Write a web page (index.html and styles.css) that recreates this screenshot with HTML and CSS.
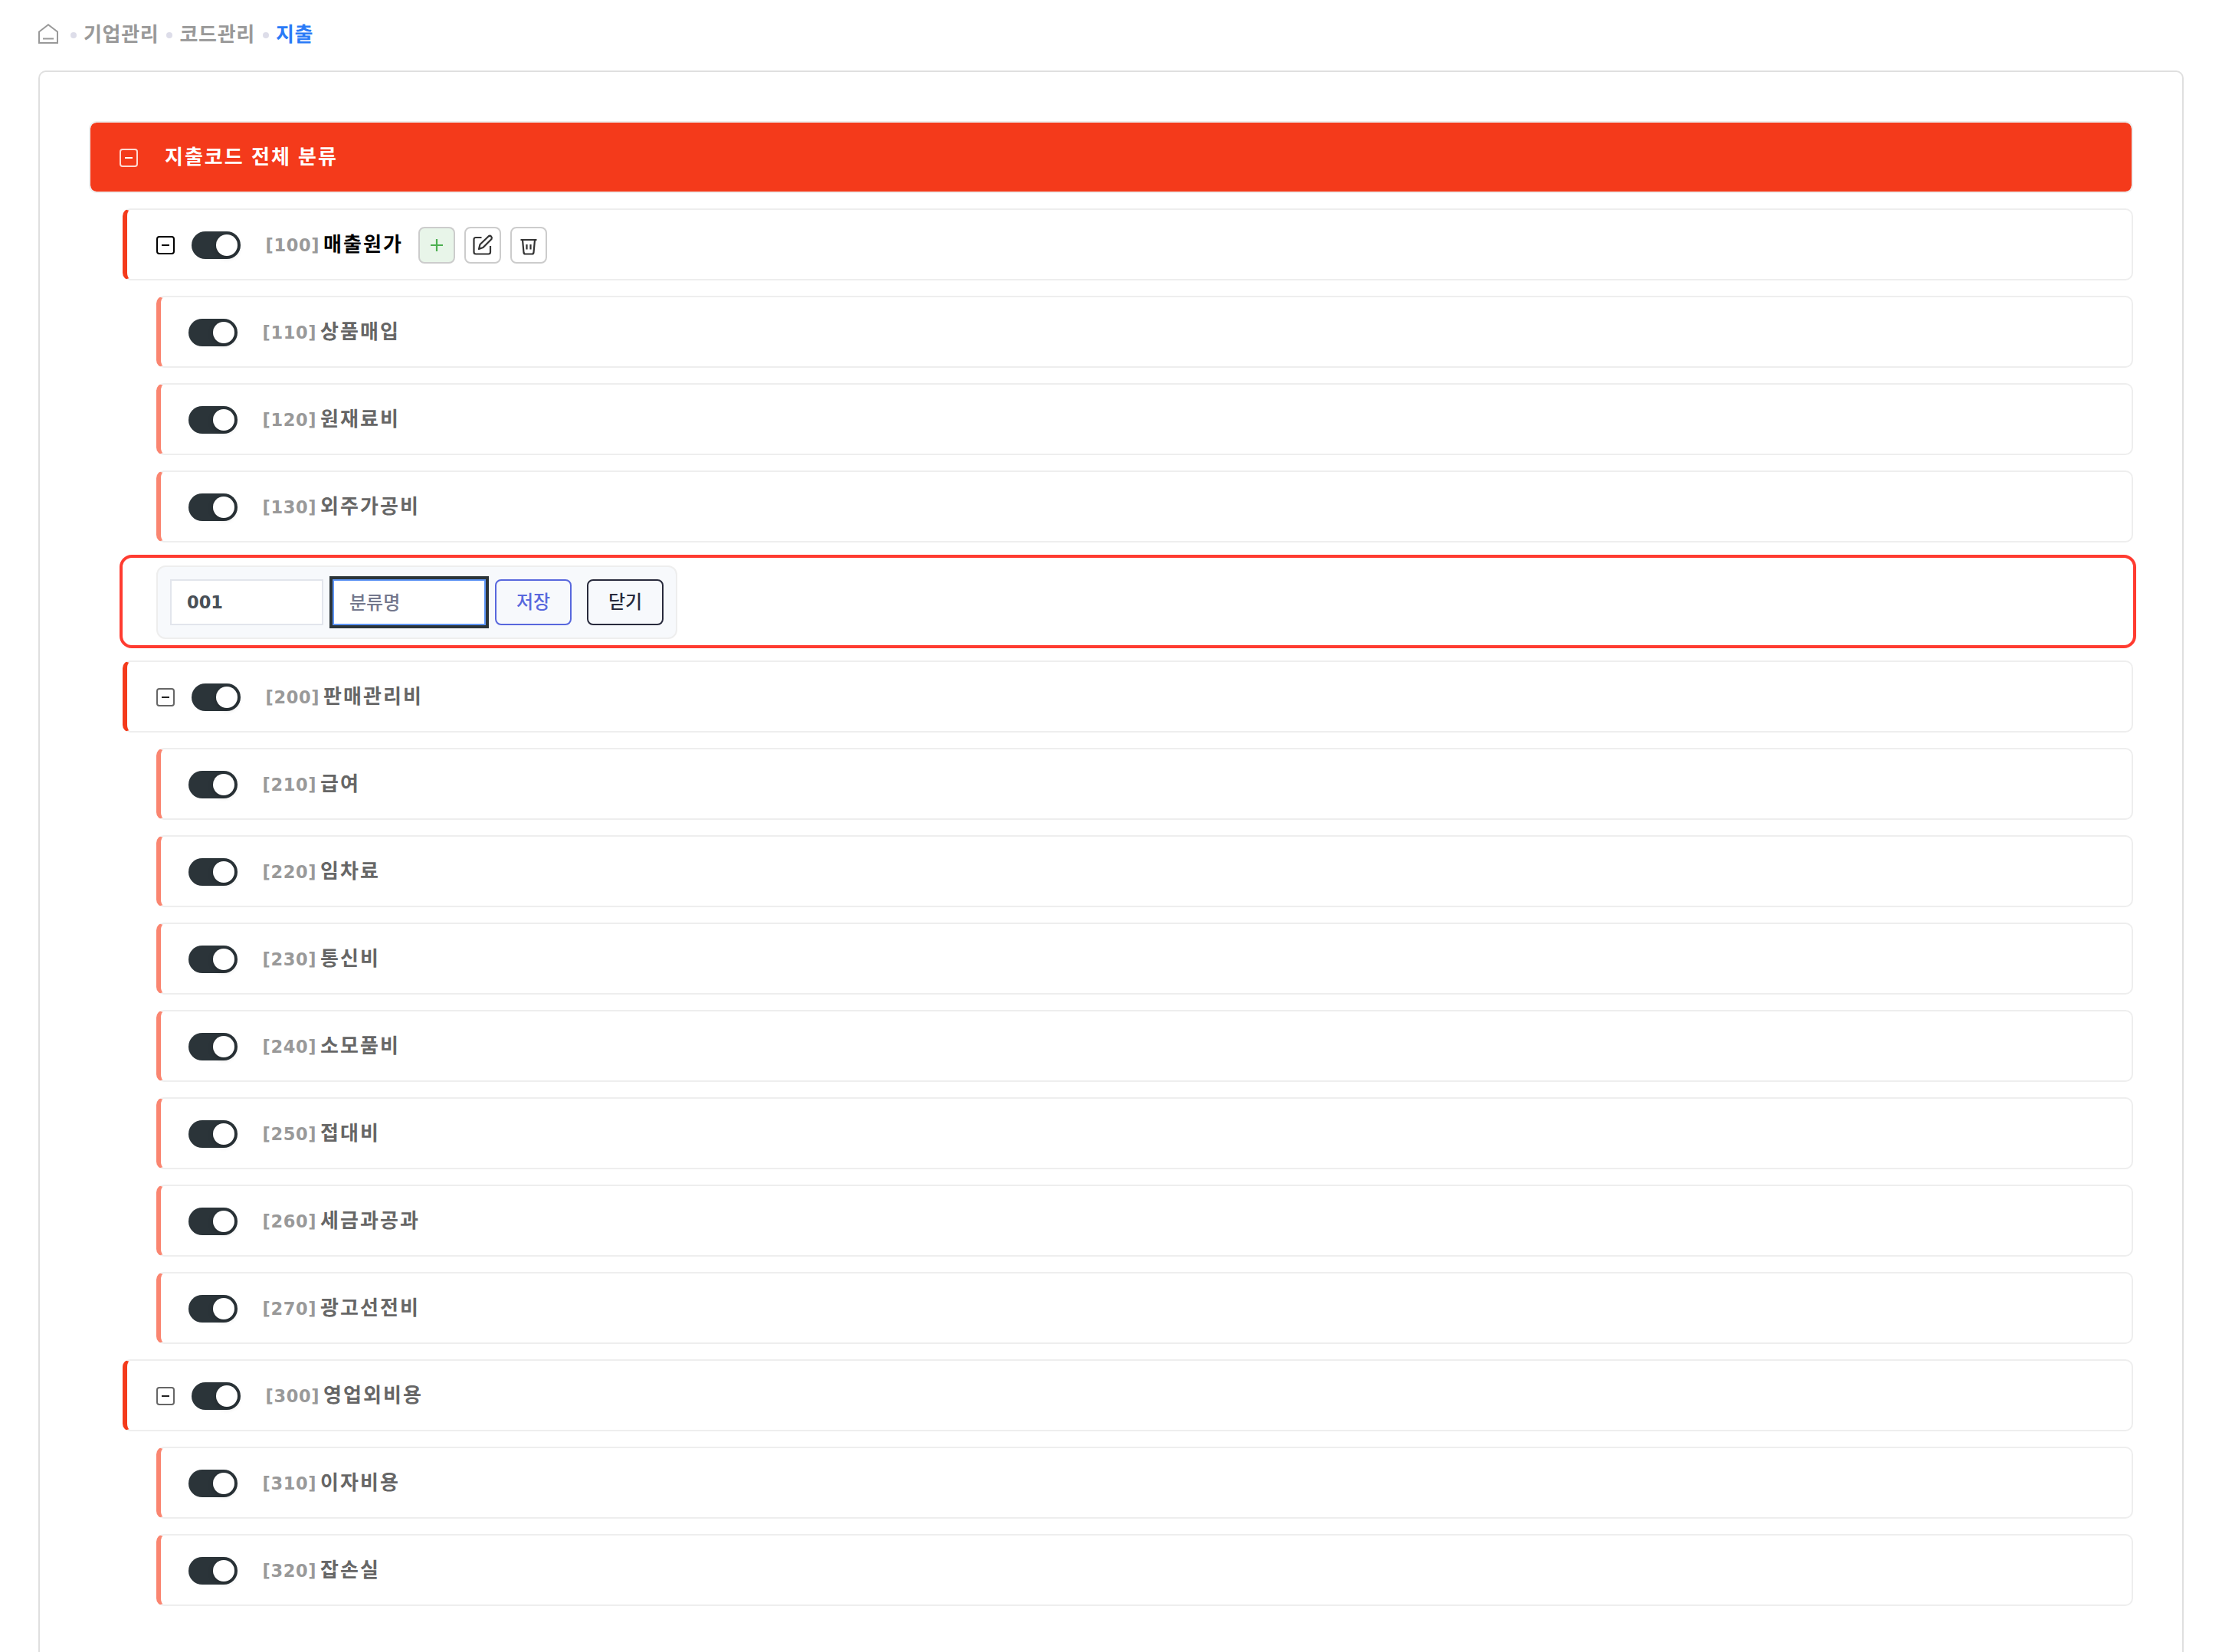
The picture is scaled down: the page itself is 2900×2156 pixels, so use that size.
FILE: index.html
```html
<!DOCTYPE html>
<html lang="ko">
<head>
<meta charset="utf-8">
<title>지출</title>
<link rel="stylesheet" href="styles.css">
</head>
<body>
<nav class="crumbs">
  <svg class="home" viewBox="0 0 26 26"><path d="M1 10.500 13 1.300 25 10.500V25H1ZM6 19.500H20"/></svg>
  <i class="dot"></i><span class="crumb">기업관리</span>
  <i class="dot"></i><span class="crumb">코드관리</span>
  <i class="dot"></i><span class="crumb current">지출</span>
</nav>
<main class="card">
  <div class="root"><i class="fold"></i><span class="root-title">지출코드 전체 분류</span></div>
  <div class="tree">
    <div class="row parent active"><i class="fold"></i><i class="toggle"></i><span class="code">[100]</span><span class="name">매출원가</span>
      <div class="tools">
        <button class="tool add"><svg viewBox="0 0 44 44"><path d="M22 14V30M14 22H30"/></svg></button>
        <button class="tool"><svg viewBox="0 0 44 44"><path d="M20.500 12H13Q10.500 12 10.500 14.500V31Q10.500 33.500 13 33.500H29.500Q32 33.500 32 31V23M17 27 18.500 21 29.500 10.500Q31.500 9 33 10.500T33.500 14L22.500 25Z"/></svg></button>
        <button class="tool"><svg viewBox="0 0 44 44"><path d="M11.500 15H32.500M14 15 15.500 31.500Q15.800 33.500 17.500 33.500H26.500Q28.200 33.500 28.500 31.500L30 15M19.500 21V27.500M24.500 21V27.500"/></svg></button>
      </div>
    </div>
    <div class="row child"><i class="toggle"></i><span class="code">[110]</span><span class="name">상품매입</span></div>
    <div class="row child"><i class="toggle"></i><span class="code">[120]</span><span class="name">원재료비</span></div>
    <div class="row child"><i class="toggle"></i><span class="code">[130]</span><span class="name">외주가공비</span></div>
    <div class="editing">
      <form class="editor">
        <input class="field" value="001">
        <input class="field focused" placeholder="분류명">
        <button type="button" class="btn save">저장</button>
        <button type="button" class="btn close">닫기</button>
      </form>
    </div>
    <div class="row parent"><i class="fold"></i><i class="toggle"></i><span class="code">[200]</span><span class="name">판매관리비</span></div>
    <div class="row child"><i class="toggle"></i><span class="code">[210]</span><span class="name">급여</span></div>
    <div class="row child"><i class="toggle"></i><span class="code">[220]</span><span class="name">임차료</span></div>
    <div class="row child"><i class="toggle"></i><span class="code">[230]</span><span class="name">통신비</span></div>
    <div class="row child"><i class="toggle"></i><span class="code">[240]</span><span class="name">소모품비</span></div>
    <div class="row child"><i class="toggle"></i><span class="code">[250]</span><span class="name">접대비</span></div>
    <div class="row child"><i class="toggle"></i><span class="code">[260]</span><span class="name">세금과공과</span></div>
    <div class="row child"><i class="toggle"></i><span class="code">[270]</span><span class="name">광고선전비</span></div>
    <div class="row parent"><i class="fold"></i><i class="toggle"></i><span class="code">[300]</span><span class="name">영업외비용</span></div>
    <div class="row child"><i class="toggle"></i><span class="code">[310]</span><span class="name">이자비용</span></div>
    <div class="row child"><i class="toggle"></i><span class="code">[320]</span><span class="name">잡손실</span></div>
  </div>
</main>
</body>
</html>
```
FILE: styles.css
```css
* { box-sizing: border-box; }
body {
  margin: 0;
  padding: 0 50px;
  background: #fff;
  font-family: "Noto Sans CJK KR", sans-serif;
  color: #666;
}
.crumbs { display: flex; align-items: center; height: 92px; }
.home { width: 26px; height: 26px; margin-top: -4px; fill: none; stroke: #999; stroke-width: 2; }
.dot { width: 8px; height: 8px; border-radius: 50%; background: #dddde9; margin: 0 9px 0 10px; }
.home + .dot { margin-left: 16px; }
.crumb { font-size: 26px; line-height: 40px; font-weight: 700; letter-spacing: .7px; color: #999; margin-top: -6px; }
.current { color: #2a7af7; }

.card {
  height: 2064px;
  border: 2px solid #dfdfdf;
  border-bottom: 0;
  border-radius: 10px 10px 0 0;
  padding: 64px 64px 0;
}
.root {
  display: flex;
  align-items: center;
  height: 94px;
  padding-left: 38px;
  border: 2px solid #eee;
  border-radius: 10px;
  background: #f43a1b padding-box;
  color: #fff;
}
.fold {
  display: flex;
  align-items: center;
  justify-content: center;
  flex: none;
  width: 24px;
  height: 24px;
  margin-top: 2px;
  border: 2px solid #666;
  border-radius: 4px;
}
.fold::before { content: ""; width: 10px; height: 2px; background: #222; }
.root .fold { border-color: #ffd9d2; }
.root .fold::before { background: #fff; }
.root-title { margin: -5px 0 0 35px; font-size: 26px; line-height: 40px; font-weight: 700; letter-spacing: 2px; }

.tree { display: flex; flex-direction: column; gap: 20px; padding: 20px 0 0 44px; }
.row {
  display: flex;
  align-items: center;
  height: 94px;
  border: 2px solid #eee;
  border-left: 6px solid #f43a1b;
  border-radius: 10px;
  padding-left: 38px;
}
.child { margin-left: 44px; padding-left: 36px; border-left-color: #fa8570; }
.toggle {
  display: flex;
  justify-content: flex-end;
  flex: none;
  width: 64px;
  height: 36px;
  margin-top: 2px;
  padding: 4px;
  border-radius: 18px;
  background: #2b3439;
}
.toggle::before { content: ""; width: 28px; height: 28px; border-radius: 50%; background: #fff; box-shadow: 0 2px 6px rgba(0, 0, 0, .25); }
.fold + .toggle { margin-left: 22px; }
.code { font: 700 22.5px/40px "DejaVu Sans", sans-serif; letter-spacing: .6px; color: #999; margin: 2px 0 0 32.5px; width: 75.5px; }
.name { font-size: 26px; line-height: 40px; font-weight: 700; letter-spacing: 2.1px; margin-top: -5px; }
.active .fold { border-color: #000; }
.active .fold::before { background: #000; }
.active .name { color: #000; }

.tools { display: flex; gap: 12px; margin: 2px 0 0 20px; }
.tool { width: 48px; height: 48px; padding: 0; border: 2px solid #ccc; border-radius: 8px; background: #fff; color: #333; }
.tool svg { display: block; width: 44px; height: 44px; fill: none; stroke: currentColor; stroke-width: 2.2; stroke-linejoin: round; }
.tool.add { background: #e8f5e9; color: #4caf50; }

.editing {
  height: 122px;
  margin: -4px -4px;
  padding: 10px 44px;
  border: 4px solid #ff3b30;
  border-radius: 16px;
}
.editor {
  display: flex;
  align-items: center;
  width: 680px;
  height: 96px;
  padding: 0 16px;
  border: 2px solid #eee;
  border-radius: 12px;
  background: #f7f9fc;
}
.field {
  width: 200px;
  height: 60px;
  padding: 0 20px;
  border: 2px solid #e2e5ec;
  background: #fff;
  font: 700 22.5px "DejaVu Sans", "Noto Sans CJK KR", sans-serif;
  color: #495057;
}
.focused { margin-left: 12px; padding-bottom: 4px; border-color: #5d94f5; outline: 4px solid #2b3439; font: 500 24px "Noto Sans CJK KR", sans-serif; }
.field::placeholder { color: #74788d; opacity: 1; }
.btn {
  width: 100px;
  height: 60px;
  padding: 0 0 5px;
  margin-left: 20px;
  border: 2px solid #282a3c;
  border-radius: 8px;
  background: transparent;
  font: 500 24px "Noto Sans CJK KR", sans-serif;
  color: #282a3c;
}
.save { margin-left: 12px; border-color: #5867dd; color: #5867dd; }
```
